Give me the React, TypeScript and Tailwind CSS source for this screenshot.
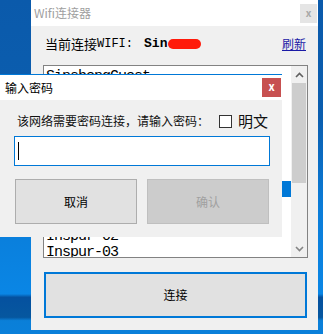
import React from "react";

const cn = '"Noto Sans CJK SC", "Noto Sans", sans-serif';
const mono = '"Liberation Mono", "Noto Sans CJK SC", monospace';

// rows 1-9 sit behind the dialog, only the selection colour shows through
const networks = ["SinshengGuest", "", "", "", "", "", "", "", "", "", "Inspur-02", "Inspur-03"];

const PasswordDialog = () => {
  return (
    <div
      className="absolute left-0 top-[74px] w-[282px] h-[163px] bg-[#f0f0f0] border-t border-[#0078d7] flex flex-col"
      style={{ fontFamily: cn }}
    >
      <div className="h-[25px] bg-white flex items-center justify-between pl-[5px] pr-[1px]">
        <span className="text-[12px] text-black">输入密码</span>
        <div className="w-[19px] h-[19px] bg-[#c75050] flex items-center justify-center text-white text-[11px] font-bold leading-none pb-[2px]">
          x
        </div>
      </div>
      <div className="flex items-center h-[26px] mt-[8px] pl-[17px]">
        <span className="w-[202px] text-[12px] text-[#111] whitespace-nowrap">该网络需要密码连接，请输入密码：</span>
        <div className="w-[13px] h-[13px] border border-[#333] bg-white" />
        <span className="ml-[6px] text-[15px] text-[#111]">明文</span>
      </div>
      <div className="mt-[2px] ml-[14px] w-[256px] h-[30px] bg-white border border-[#0078d7] flex items-center pl-[3px]">
        <div className="w-px h-[18px] bg-black" />
      </div>
      <div className="mt-[13px] ml-[15px] flex gap-[10px]">
        <div className="w-[122px] h-[45px] bg-[#e1e1e1] border border-[#adadad] flex items-center justify-center text-[12px] text-black">
          取消
        </div>
        <div className="w-[122px] h-[45px] bg-[#cccccc] border border-[#bfbfbf] flex items-center justify-center text-[12px] text-[#a0a0a0]">
          确认
        </div>
      </div>
    </div>
  );
};

export default function App() {
  return (
    <div className="relative w-[323px] h-[334px] overflow-hidden bg-[linear-gradient(180deg,#0b5aab_0%,#0b5eaf_35%,#0a7cd8_62%,#0a86e5_88%,#05519f_89%,#06579f_95%,#0a7fd8_96%,#0a80da_100%)]">
      <div className="ml-[31px] w-[287px] h-[330px] bg-[#f0f0f0] flex flex-col" style={{ fontFamily: cn }}>
        <div className="h-[26px] bg-white flex items-center justify-between pl-[3px] pr-[1px]">
          <span className="text-[12px] text-[#a0a0a0]">Wifi连接器</span>
          <div className="w-[17px] h-[19px] bg-[#e5e5e5] flex items-center justify-center text-[#a8a8a8] text-[10px] font-bold pb-[2px]">
            x
          </div>
        </div>

        <div className="h-[36px] flex items-center pl-[14px] pr-[12px]">
          <span className="text-[13px] text-black">当前连接</span>
          <span className="text-[12px] text-black" style={{ fontFamily: mono }}>WIFI:</span>
          <span className="ml-[11px] text-[13px] font-bold text-black" style={{ fontFamily: mono }}>Sin</span>
          <span className="ml-[1px] w-[33px] h-[10px] rounded-full bg-[#ff1a0a]" />
          <span className="ml-auto text-[12px] text-[#1a1aa6] underline">刷新</span>
        </div>

        <div className="mt-[3px] ml-[12px] w-[265px] h-[193px] bg-white border border-[#828282] flex">
          <div className="flex-1 flex flex-col pt-[3px] overflow-hidden">
            {networks.map((n, i) => (
              <div
                key={i}
                className={
                  "h-[16px] shrink-0 pl-[2px] text-[15px] tracking-[-1px] leading-[16px] " +
                  (i === 7 ? "bg-[#0078d7] text-white" : "text-black")
                }
                style={{ fontFamily: mono }}
              >
                {n}
              </div>
            ))}
          </div>
          <div className="w-[16px] bg-[#f0f0f0] flex flex-col">
            <div className="h-[17px] flex items-center justify-center">
              <svg width="9" height="6" viewBox="0 0 9 6">
                <path d="M1 5 L4.5 1.5 L8 5" stroke="#606060" strokeWidth="1.6" fill="none" />
              </svg>
            </div>
            <div className="h-[100px] mx-px bg-[#cdcdcd]" />
            <div className="flex-1" />
            <div className="h-[17px] flex items-center justify-center">
              <svg width="9" height="6" viewBox="0 0 9 6">
                <path d="M1 1 L4.5 4.5 L8 1" stroke="#858585" strokeWidth="1.6" fill="none" />
              </svg>
            </div>
          </div>
        </div>

        <div className="mt-[14px] ml-[13px] w-[263px] h-[46px] bg-[#e1e1e1] border-2 border-[#0078d7] flex items-center justify-center text-[12px] text-black">
          连接
        </div>
      </div>

      <PasswordDialog />
    </div>
  );
}
